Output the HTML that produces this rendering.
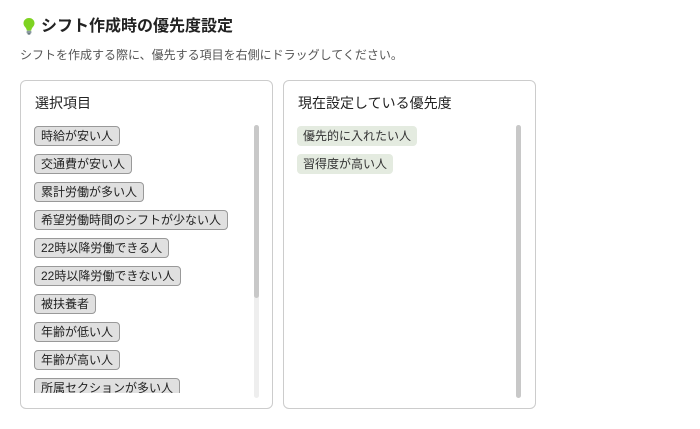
<!DOCTYPE html>
<html><head><meta charset="utf-8"><style>
*{box-sizing:border-box;margin:0;padding:0}
body{width:700px;height:429px;background:#fff;font-family:"Liberation Sans","Noto Sans CJK JP",sans-serif;color:#222;position:relative;overflow:hidden}
.abs{position:absolute}
h1{position:absolute;left:41px;top:16px;font-size:16px;font-weight:bold;color:#222;line-height:22px}
.sub{left:20px;top:47px;font-size:12px;color:#555;line-height:16px}
.panel{position:absolute;top:80px;width:253px;height:329px;border:1px solid #ccc;border-radius:6px}
.ptitle{position:absolute;left:14px;top:13px;font-size:14px;line-height:18px;color:#222}
.list{position:absolute;left:13px;top:45px;width:210px;height:267px;overflow:hidden}
.chip{position:absolute;left:0;height:20px;padding:0 6px;font-size:12px;line-height:18px;background:#e0e0e0;border:1px solid #999;border-radius:4px;white-space:nowrap;color:#222}
.g{background:#e4ebe0;border:none;line-height:20px;color:#333}
.track{position:absolute;width:5px;border-radius:3px;background:#eee}
.thumb{position:absolute;left:0;top:0;width:5px;border-radius:3px;background:#c8c8c8}
</style></head><body>
<svg class="abs" style="left:22px;top:17px" width="14" height="18" viewBox="0 0 14 18">
<path d="M7 1C3.6 1 1.5 3.5 1.5 6.3c0 2.2 1.4 3.4 2.4 4.8.6.9.8 1.6.8 2.4h4.6c0-.8.2-1.5.8-2.4 1-1.4 2.4-2.6 2.4-4.8C12.5 3.5 10.4 1 7 1z" fill="#7ed321"/>
<rect x="4.6" y="13.6" width="4.8" height="3" rx="1" fill="#8a9aa0"/>
<rect x="5.6" y="16.3" width="2.8" height="1.3" rx=".6" fill="#5f6f75"/>
</svg>
<h1>シフト作成時の優先度設定</h1>
<div class="abs sub">シフトを作成する際に、優先する項目を右側にドラッグしてください。</div>

<div class="panel" style="left:20px">
<div class="ptitle">選択項目</div>
<div class="list">
<div class="chip" style="top:0">時給が安い人</div>
<div class="chip" style="top:28px">交通費が安い人</div>
<div class="chip" style="top:56px">累計労働が多い人</div>
<div class="chip" style="top:84px">希望労働時間のシフトが少ない人</div>
<div class="chip" style="top:112px">22時以降労働できる人</div>
<div class="chip" style="top:140px">22時以降労働できない人</div>
<div class="chip" style="top:168px">被扶養者</div>
<div class="chip" style="top:196px">年齢が低い人</div>
<div class="chip" style="top:224px">年齢が高い人</div>
<div class="chip" style="top:252px">所属セクションが多い人</div>
</div>
<div class="track" style="left:233px;top:44px;height:273px"><div class="thumb" style="height:173px"></div></div>
</div>

<div class="panel" style="left:283px">
<div class="ptitle">現在設定している優先度</div>
<div class="list">
<div class="chip g" style="top:0">優先的に入れたい人</div>
<div class="chip g" style="top:28px">習得度が高い人</div>
</div>
<div class="track" style="left:232px;top:44px;height:273px"><div class="thumb" style="height:273px"></div></div>
</div>
</body></html>
